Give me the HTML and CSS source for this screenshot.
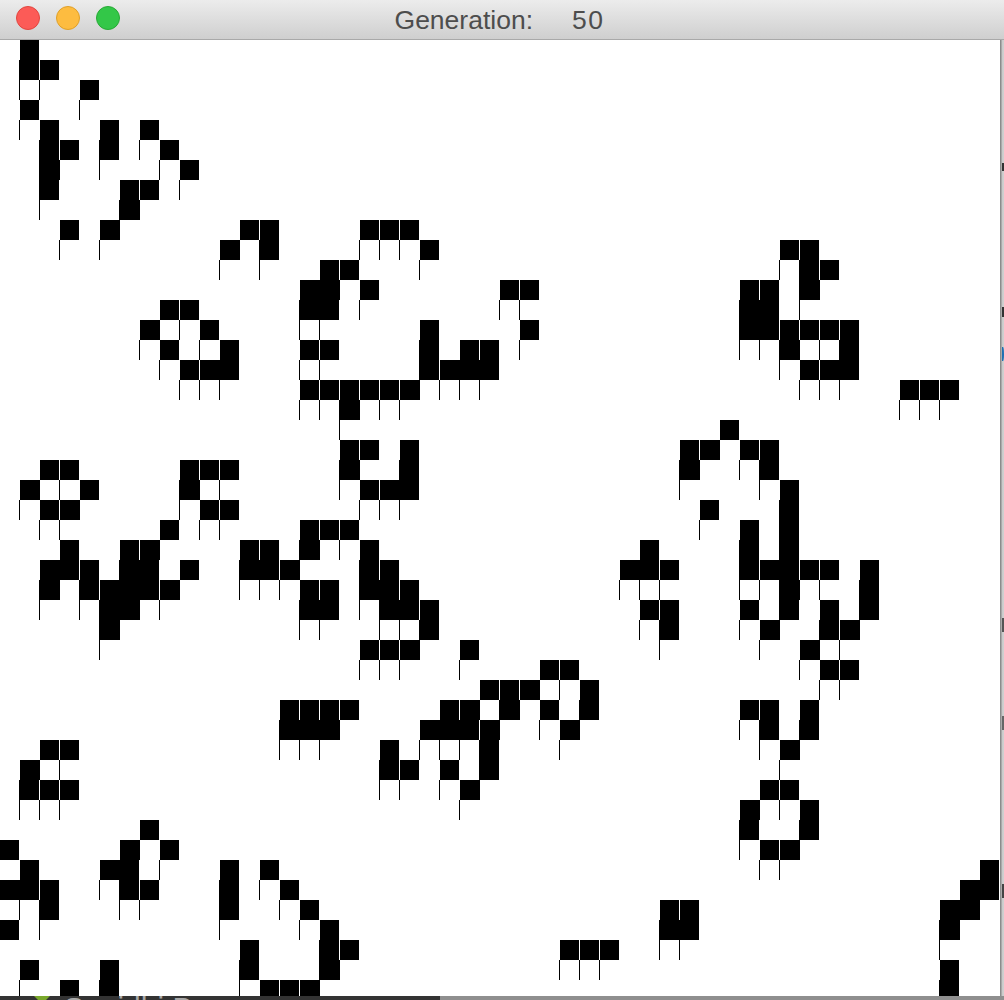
FILE: index.html
```html
<!DOCTYPE html>
<html lang="en">
<head>
<meta charset="utf-8">
<title>Generation: 50</title>
<link rel="stylesheet" href="styles.css">
</head>
<body>
<main class="window">
  <header class="titlebar">
    <div class="lights">
      <span class="light light-close"></span>
      <span class="light light-min"></span>
      <span class="light light-max"></span>
    </div>
    <h1 class="title"><span>Generation:</span><span class="count">50</span></h1>
  </header>
  <div class="content">
    <div class="board" id="board"></div>
    <aside class="behind">
      <span class="frag frag-a"></span>
      <span class="frag frag-b"></span>
      <span class="frag frag-c"></span>
      <span class="frag frag-d"></span>
      <span class="frag frag-e"></span>
      <span class="frag frag-f"></span>
    </aside>
  </div>
  <footer class="dock">
    <div class="dock-dark">
      <svg class="dock-icon" width="16" height="4" viewBox="0 0 16 4"><path d="M0 0H16L12 4H4Z" fill="#7aa82c"/></svg>
      <span class="dock-name">Sunidhi Bowman</span>
    </div>
    <div class="dock-rest"></div>
  </footer>
</main>
<script src="script.js"></script>
</body>
</html>
```
FILE: styles.css
```css
* { box-sizing: border-box; }
html, body { margin: 0; padding: 0; background: #fff; }
body { width: 1004px; height: 1000px; overflow: hidden; font-family: "Liberation Sans", Arial, sans-serif; }

.window { display: flex; flex-direction: column; width: 1004px; height: 1000px; }

.titlebar {
  position: relative;
  flex: 0 0 40px;
  min-height: 0;
  display: flex;
  align-items: center;
  justify-content: center;
  background: linear-gradient(#ececec, #cfcfcf);
  border-bottom: 1px solid #a9a9a9;
}
.lights { position: absolute; top: 6px; left: 16px; display: flex; gap: 16px; }
.light { width: 24px; height: 24px; border-radius: 50%; border: 1px solid; }
.light-close { background: #fc5b57; border-color: #e2463f; }
.light-min { background: #fdbc40; border-color: #e0a028; }
.light-max { background: #33c748; border-color: #27aa35; }
.title {
  display: flex;
  gap: 39px;
  margin: 0 0 0 -5px;
  font-size: 26.5px;
  font-weight: 400;
  line-height: 38px;
  color: #4d4d4d;
}
.count { letter-spacing: 1.5px; }

.content { flex: 1 1 auto; display: flex; min-height: 0; }

.board {
  flex: 0 0 1000px;
  display: grid;
  grid-template-columns: repeat(50, 20px);
  grid-auto-rows: 20px;
  background: #fff;
  overflow: hidden;
}
.cell { position: relative; width: 19px; height: 20px; background: #000; }
.cell::after {
  content: "";
  position: absolute;
  left: -1px;
  top: 20px;
  width: 1px;
  height: 20px;
  background: #000;
}

.behind {
  position: relative;
  flex: 0 0 4px;
  background: linear-gradient(90deg, #8c8c8c 0, #8c8c8c 1px, #c8c8c8 2px, #d2d2d2 100%);
}
.frag { position: absolute; left: 2px; width: 2px; background: #333; }
.frag-a { top: 123px; height: 8px; }
.frag-b { top: 267px; height: 10px; }
.frag-c { top: 307px; height: 14px; width: 2px; background: #1f6fb2; border-radius: 0 50% 50% 0; }
.frag-d { top: 578px; height: 14px; background: #555; }
.frag-e { top: 676px; height: 14px; background: #666; }
.frag-f { top: 844px; height: 14px; background: #444; }

.dock { flex: 0 0 4px; display: flex; overflow: hidden; }
.dock-dark {
  flex: 0 0 440px;
  display: flex;
  align-items: flex-start;
  gap: 14px;
  padding-left: 34px;
  background: #333;
  overflow: hidden;
}
.dock-icon { flex: none; }
.dock-name { margin-top: -3px; font-size: 30px; line-height: 30px; color: #a8a8a8; white-space: nowrap; }
.dock-rest { flex: 1 1 auto; background: #8f8f8f; }
```
FILE: script.js
```js
var rows = [
  [1],
  [1,2],
  [4],
  [1],
  [2,5,7],
  [2,3,5,8],
  [2,9],
  [2,6,7],
  [6],
  [3,5,12,13,18,19,20],
  [11,13,21,39,40],
  [16,17,40,41],
  [15,16,18,25,26,37,38,40],
  [8,9,15,16,37,38],
  [7,10,21,26,37,38,39,40,41,42],
  [8,11,15,16,21,23,24,39,42],
  [9,10,11,21,22,23,24,40,41,42],
  [15,16,17,18,19,20,45,46,47],
  [17],
  [36],
  [17,18,20,34,35,37,38],
  [2,3,9,10,11,17,20,34,38],
  [1,4,9,18,19,20,39],
  [2,3,10,11,35,39],
  [8,15,16,17,37,39],
  [3,6,7,12,13,15,18,32,37,39],
  [2,3,4,6,7,9,12,13,14,18,19,31,32,33,37,38,39,40,41,43],
  [2,4,5,6,7,8,15,16,18,19,20,39,43],
  [5,6,15,16,19,20,21,32,33,37,39,41,43],
  [5,21,33,38,41,42],
  [18,19,20,23,40],
  [27,28,41,42],
  [24,25,26,29],
  [14,15,16,17,22,23,25,27,29,37,38,40],
  [14,15,16,21,22,23,24,28,38,40],
  [2,3,19,24,39],
  [1,19,20,22,24],
  [1,2,3,23,38,39],
  [37,40],
  [7,37,40],
  [0,6,8,38,39],
  [1,5,6,11,13,49],
  [0,1,2,6,7,11,14,48,49],
  [2,11,15,33,34,47,48],
  [0,16,33,34,47],
  [12,16,17,28,29,30],
  [1,5,12,16,47],
  [3,5,13,14,15,47]
];
var board = document.getElementById("board");
rows.forEach(function (cols, r) {
  cols.forEach(function (c) {
    var cell = document.createElement("div");
    cell.className = "cell";
    cell.style.gridRow = String(r + 1);
    cell.style.gridColumn = String(c + 1);
    board.appendChild(cell);
  });
});
```
